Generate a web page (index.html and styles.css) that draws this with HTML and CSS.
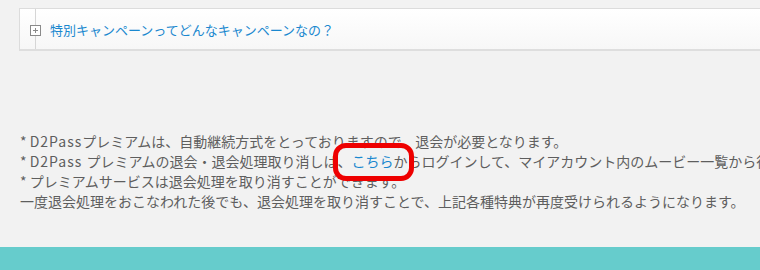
FILE: index.html
```html
<!DOCTYPE html>
<html lang="ja">
<head>
<meta charset="utf-8">
<link rel="stylesheet" href="styles.css">
</head>
<body>
<div class="page">
  <div class="faq">
    <div class="faq-gutter"></div>
    <span class="faq-icon"></span>
    <a class="faq-title" href="#">特別キャンペーンってどんなキャンペーンなの？</a>
  </div>
  <div class="notes">
    <p>* <span class="d2">D2Pass</span>プレミアムは、自動継続方式をとっておりますので、退会が必要となります。</p>
    <p>* <span class="d2">D2Pass </span>プレミアムの退会・退会処理取り消しは、<span class="mark"><a href="#" class="link">こちら</a></span>からログインして、マイアカウント内のムービー一覧から行</p>
    <p>* プレミアムサービスは退会処理を取り消すことができます。</p>
    <p>一度退会処理をおこなわれた後でも、退会処理を取り消すことで、上記各種特典が再度受けられるようになります。</p>
  </div>
</div>
<div class="footer"></div>
</body>
</html>
```
FILE: styles.css
```css
html, body {
  margin: 0;
  padding: 0;
}
body {
  background: #f2f2f2;
  font-family: "Noto Sans CJK JP", "Noto Sans", sans-serif;
  overflow: hidden;
  width: 760px;
}
.page {
  padding: 8px 0 0 19px;
  height: 247px;
  box-sizing: border-box;
}
.faq {
  position: relative;
  display: flex;
  align-items: center;
  width: 800px;
  height: 43px;
  box-sizing: border-box;
  border: 1px solid #dcdcdc;
  border-bottom: 2px solid #dedede;
  background: linear-gradient(#ffffff, #f7f7f7);
}
.faq-gutter {
  align-self: stretch;
  width: 15px;
  border-right: 1px solid #d6d6d6;
}
.faq-icon {
  position: absolute;
  left: 10px;
  top: 16px;
  width: 9px;
  height: 9px;
  border: 1px solid #8a8a8a;
  background: #fff;
}
.faq-icon::before,
.faq-icon::after {
  content: "";
  position: absolute;
  background: #8a8a8a;
}
.faq-icon::before {
  left: 2px;
  top: 4px;
  width: 5px;
  height: 1px;
}
.faq-icon::after {
  left: 4px;
  top: 2px;
  width: 1px;
  height: 5px;
}
.faq-title {
  margin-left: 14px;
  font-size: 13px;
  color: #1a88cf;
  text-decoration: none;
  white-space: nowrap;
}
.notes {
  margin-top: 80px;
  margin-left: 1px;
  font-size: 14px;
  line-height: 20px;
  color: #5e5e5e;
}
.notes p {
  margin: 0;
  white-space: nowrap;
}
.d2 {
  letter-spacing: 1px;
}
.mark {
  position: relative;
}
.mark::after {
  content: "";
  position: absolute;
  left: -18px;
  right: -21px;
  top: -8px;
  bottom: -10px;
  border: 5px solid #ee0000;
  border-radius: 13px;
}
.link {
  color: #1a88cf;
  text-decoration: none;
}
.footer {
  height: 23px;
  background: #66cccc;
}
```
